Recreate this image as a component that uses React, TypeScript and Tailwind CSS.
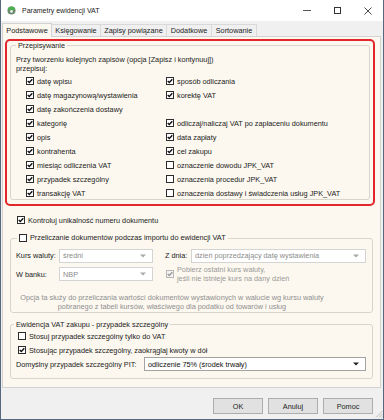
import React from 'react';

const left = [
  'datę wpisu',
  'datę magazynową/wystawienia',
  'datę zakończenia dostawy',
  'kategorię',
  'opis',
  'kontrahenta',
  'miesiąc odliczenia VAT',
  'przypadek szczególny',
  'transakcję VAT',
];

// null = empty slot in the right column
const right: ([string, boolean] | null)[] = [
  ['sposób odliczania', true],
  ['korektę VAT', true],
  null,
  ['odliczaj/naliczaj VAT po zapłaceniu dokumentu', true],
  ['data zapłaty', true],
  ['cel zakupu', true],
  ['oznaczenie dowodu JPK_VAT', false],
  ['oznaczenia procedur JPK_VAT', false],
  ['oznaczenia dostawy i świadczenia usług JPK_VAT', false],
];

const tabs = [
  { label: 'Podstawowe', w: 'w-[50px]' },
  { label: 'Księgowanie', w: 'w-[49px]' },
  { label: 'Zapisy powiązane', w: 'w-[66px]' },
  { label: 'Dodatkowe', w: 'w-[45px]' },
  { label: 'Sortowanie', w: 'w-[45px]' },
];

function Box({ checked, disabled }: { checked?: boolean; disabled?: boolean }) {
  return (
    <span
      className={`flex w-[8px] h-[8px] shrink-0 items-center justify-center border ${
        disabled ? 'border-[#b8b8b8] bg-[#f3f3f3]' : 'border-[#2b2b2b] bg-white'
      }`}
    >
      {checked && (
        <svg viewBox="0 0 6 6" className="w-[6px] h-[6px]">
          <path d="M0.7 2.9 L2.3 4.5 L5.3 1.2" fill="none" stroke={disabled ? '#9a9a9a' : '#111'} strokeWidth="1.4" />
        </svg>
      )}
    </span>
  );
}

function Check({ label, checked, className = '' }: { label: string; checked?: boolean; className?: string }) {
  return (
    <div className={`flex items-center gap-[3px] h-[14px] ${className}`}>
      <Box checked={checked} />
      <span className="whitespace-nowrap">{label}</span>
    </div>
  );
}

function Select({ value, disabled, w }: { value: string; disabled?: boolean; w: string }) {
  return (
    <div
      className={`${w} h-[14px] flex items-center justify-between pl-[3px] pr-[6px] bg-white border ${
        disabled ? 'border-[#d4d4d4] text-[#8c8c8c]' : 'border-[#a3a3a3] text-[#111]'
      }`}
    >
      <span className="whitespace-nowrap">{value}</span>
      <svg viewBox="0 0 6 4" className="w-[6px] h-[4px]">
        <path d="M0 0.5 H6 L3 3.5 Z" fill={disabled ? '#a8a8a8' : '#222'} />
      </svg>
    </div>
  );
}

export default function App() {
  return (
    <div className="w-[384px] h-[420px] flex flex-col bg-[#f0f0f0] border-x border-b border-[#56677e] text-[7.3px] leading-[9px] text-[#1b1b1b] font-['Liberation_Sans',Arial,sans-serif] overflow-hidden">
      {/* Title bar */}
      <div className="h-[21px] shrink-0 bg-white flex items-center">
        <svg viewBox="0 0 10 10" className="ml-[6px] w-[9px] h-[9px]">
          <circle cx="5" cy="5" r="4.5" fill="#6c8a6e" />
          <path d="M1 4.5 A4 4 0 0 1 9 4.5 Z" fill="#4caf50" />
          <circle cx="5" cy="6" r="1.6" fill="#e8efe6" />
        </svg>
        <span className="ml-[6px] text-[7px] text-[#222]">Parametry ewidencji VAT</span>
        <div className="ml-auto flex items-center h-full">
          <div className="w-[30px] flex justify-center">
            <span className="block w-[8px] h-px bg-[#555]" />
          </div>
          <div className="w-[30px] flex justify-center">
            <span className="block w-[7px] h-[7px] border border-[#333]" />
          </div>
          <div className="w-[31px] flex justify-center">
            <svg viewBox="0 0 8 8" className="w-[8px] h-[8px]">
              <path d="M0.5 0.5 L7.5 7.5 M7.5 0.5 L0.5 7.5" stroke="#333" strokeWidth="0.9" />
            </svg>
          </div>
        </div>
      </div>

      {/* Tabs */}
      <div className="flex items-end ml-[1px] mt-[1px] h-[14px]">
        {tabs.map((t, i) =>
          i === 0 ? (
            <div
              key={t.label}
              className={`${t.w} h-[14px] -mb-px relative z-10 flex items-center justify-center bg-[#fcf8ef] border border-b-0 border-[#d2d2d2]`}
            >
              {t.label}
            </div>
          ) : (
            <div
              key={t.label}
              className={`${t.w} h-[12px] flex items-center justify-center bg-[#f0f0f0] border border-b-0 border-l-0 border-[#d9d9d9]`}
            >
              {t.label}
            </div>
          )
        )}
      </div>

      {/* Tab panel */}
      <div className="ml-[1px] w-[379px] h-[352px] shrink-0 bg-[#fcf8ef] border border-[#d2d2d2] flex flex-col">
        {/* highlighted group */}
        <div className="ml-[2px] mt-[2px] w-[370px] h-[167px] border-2 border-[#e3262b] rounded-[5px]">
          <fieldset className="ml-[3px] w-[360px] h-[159px] border border-[#d9d5cb] rounded-[3px] pl-[5px]">
            <legend className="px-[2px]">Przepisywanie</legend>
            <p className="mt-[5px]">
              Przy tworzeniu kolejnych zapisów (opcja [Zapisz i kontynuuj])
              <br />
              przepisuj:
            </p>
            <div className="mt-[1px] ml-[10px] grid grid-cols-[140px_1fr]">
              {left.map((l, i) => (
                <React.Fragment key={l}>
                  <Check label={l} checked />
                  {right[i] ? <Check label={right[i]![0]} checked={right[i]![1]} /> : <div className="h-[14px]" />}
                </React.Fragment>
              ))}
            </div>
          </fieldset>
        </div>

        <Check label="Kontroluj unikalność numeru dokumentu" checked className="mt-[7px] ml-[14px]" />

        <fieldset className="mt-[6px] ml-[7px] w-[363px] h-[80px] border border-[#d9d5cb] rounded-[3px] pl-[5px]">
          <legend className="ml-[1px] px-[2px]">
            <span className="inline-flex items-center gap-[3px]">
              <Box />
              Przeliczanie dokumentów podczas importu do ewidencji VAT
            </span>
          </legend>
          <div className="mt-[5px] flex items-center h-[14px]">
            <span className="w-[43px]">Kurs waluty:</span>
            <Select value="średni" disabled w="w-[94px]" />
            <span className="ml-[12px] w-[26px]">Z dnia:</span>
            <Select value="dzień poprzedzający datę wystawienia" disabled w="w-[175px]" />
          </div>
          <div className="mt-[2px] flex items-center">
            <span className="w-[43px]">W banku:</span>
            <Select value="NBP" disabled w="w-[94px]" />
            <span className="ml-[13px]">
              <Box checked disabled />
            </span>
            <span className="ml-[3px] leading-[9.5px] text-[#999]">
              Pobierz ostatni kurs waluty,
              <br />
              jeśli nie istnieje kurs na dany dzień
            </span>
          </div>
          <p className="mt-[9px] w-[312px] text-center text-[#8f8f8f]">
            Opcja ta służy do przeliczania wartości dokumentów wystawionych w walucie wg kursu waluty
            <br />
            pobranego z tabeli kursów, właściwego dla podatku od towarów i usług
          </p>
        </fieldset>

        <fieldset className="mt-[7px] ml-[7px] w-[363px] h-[59px] border border-[#d9d5cb] rounded-[3px] pl-[5px]">
          <legend className="-ml-[2px] px-[2px]">Ewidencja VAT zakupu - przypadek szczególny</legend>
          <Check label="Stosuj przypadek szczególny tylko do VAT" className="ml-[2px]" />
          <Check label="Stosując przypadek szczególny, zaokrąglaj kwoty w dół" checked className="ml-[2px]" />
          <div className="flex items-center h-[14px]">
            <span className="w-[128px]">Domyślny przypadek szczególny PIT:</span>
            <Select value="odliczenie 75% (środek trwały)" w="w-[222px]" />
          </div>
        </fieldset>
      </div>

      {/* Buttons */}
      <div className="flex flex-1 items-start justify-end">
        <div className="mt-[10px] flex gap-[5px]">
          {['OK', 'Anuluj', 'Pomoc'].map((b) => (
            <button
              key={b}
              className="w-[50px] h-[16px] flex items-center justify-center bg-[#e1e1e1] border border-[#adadad]"
            >
              {b}
            </button>
          ))}
        </div>
        <svg viewBox="0 0 8 8" className="ml-[2px] self-end mb-[1px] w-[8px] h-[8px]">
          <path d="M7.5 1 L1 7.5 M7.5 4 L4 7.5 M7.5 6.5 L6.5 7.5" stroke="#b0b0b0" strokeWidth="0.8" />
        </svg>
      </div>
    </div>
  );
}
